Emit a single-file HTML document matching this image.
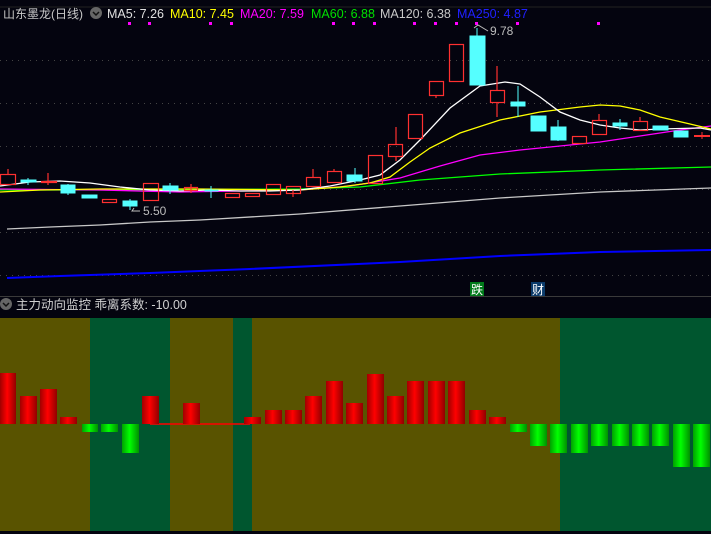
<!DOCTYPE html><html><head><meta charset="utf-8"><style>
body{margin:0;width:711px;height:534px;background:#04040f;overflow:hidden;font-family:"Liberation Sans","Noto Sans CJK SC",sans-serif}
</style></head><body>
<svg width="711" height="534" xmlns="http://www.w3.org/2000/svg" style="position:absolute;left:0;top:0">
<defs>
<linearGradient id="rg" x1="0" x2="1"><stop offset="0" stop-color="#a00000"/><stop offset=".45" stop-color="#ff0000"/><stop offset="1" stop-color="#900000"/></linearGradient>
<linearGradient id="gg" x1="0" x2="1"><stop offset="0" stop-color="#00a000"/><stop offset=".45" stop-color="#00ff00"/><stop offset="1" stop-color="#009000"/></linearGradient>
</defs>
<rect width="711" height="534" fill="#04040f"/>
<line x1="0" y1="7" x2="711" y2="7" stroke="#222" stroke-width="1"/>
<g stroke="#444" stroke-dasharray="1,5" stroke-width="1">
<line x1="0" y1="60.5" x2="711" y2="60.5"/><line x1="0" y1="103.5" x2="711" y2="103.5"/><line x1="0" y1="146.5" x2="711" y2="146.5"/><line x1="0" y1="189.5" x2="711" y2="189.5"/><line x1="0" y1="232.5" x2="711" y2="232.5"/><line x1="0" y1="275.5" x2="711" y2="275.5"/>
</g>
<line x1="0" y1="296.5" x2="711" y2="296.5" stroke="#3a3a3a"/>
<g fill="#ff00ff">
<rect x="128" y="22" width="3" height="3"/><rect x="148" y="22" width="3" height="3"/><rect x="209" y="22" width="3" height="3"/><rect x="230" y="22" width="3" height="3"/><rect x="332" y="22" width="3" height="3"/><rect x="352" y="22" width="3" height="3"/><rect x="373" y="22" width="3" height="3"/><rect x="413" y="22" width="3" height="3"/><rect x="434" y="22" width="3" height="3"/><rect x="455" y="22" width="3" height="3"/><rect x="475" y="22" width="3" height="3"/><rect x="516" y="22" width="3" height="3"/><rect x="597" y="22" width="3" height="3"/>
</g>
<g fill="none" stroke-width="1.3">
<polyline stroke="#0000ff" stroke-width="2" points="7,278 60,276 150,273 250,269 400,262 500,256 600,252 711,250"/>
<polyline stroke="#c8c8c8" points="7,229 50,227 100,225 150,222 200,220 300,214 400,206 500,198 600,192 711,188"/>
<polyline stroke="#00ff00" points="0,190 100,190 300,189 360,187 420,180 500,174 600,170 711,167"/>
<polyline stroke="#ff00ff" points="0,189 100,190 180,192 300,190 350,186 400,178 440,166 480,155 520,150 560,146 600,142 640,136 680,130 711,126"/>
<polyline stroke="#ffff00" points="0,192 40,190 100,189 200,189 300,190 340,187 370,183 390,177 410,162 430,148 460,133 500,120 540,112 580,107 600,105 620,106 640,110 660,117 690,124 711,129"/>
<polyline stroke="#ffffff" points="0,186 30,182 60,181 90,183 120,187 150,190 180,191 210,190 240,191 270,191 300,190 330,186 360,180 380,175 400,160 420,140 450,108 480,86 505,82 520,84 540,97 560,112 580,120 600,125 620,128 640,130 660,129 700,128 711,130"/>
</g>
<g stroke="#ff3030" fill="none" stroke-width="1.2">
<line x1="8" y1="169" x2="8" y2="174"/><rect x="0.5" y="174.5" width="15" height="10"/>
<line x1="48" y1="173" x2="48" y2="185"/><rect x="41.5" y="181.5" width="15" height="1"/>
<rect x="102.5" y="199.5" width="14" height="3"/>
<rect x="143.5" y="183.5" width="15" height="17"/>
<line x1="191" y1="184" x2="191" y2="193"/><rect x="184.5" y="187.5" width="13" height="3"/>
<rect x="225.5" y="193.5" width="14" height="4"/>
<rect x="245.5" y="193.5" width="14" height="3"/>
<rect x="266.5" y="184.5" width="14" height="10"/>
<line x1="293" y1="190" x2="293" y2="197"/><rect x="286.5" y="186.5" width="14" height="7"/>
<line x1="313" y1="169" x2="313" y2="177"/><rect x="306.5" y="177.5" width="14" height="9"/>
<line x1="334" y1="169" x2="334" y2="171"/><rect x="327.5" y="171.5" width="14" height="11"/>
<rect x="368.5" y="155.5" width="14" height="28"/>
<line x1="396" y1="127" x2="396" y2="144"/><line x1="396" y1="156" x2="396" y2="161"/><rect x="388.5" y="144.5" width="14" height="12"/>
<rect x="408.5" y="114.5" width="14" height="24"/>
<line x1="436" y1="95" x2="436" y2="98"/><rect x="429.5" y="81.5" width="14" height="14"/>
<rect x="449.5" y="44.5" width="14" height="37"/>
<line x1="497" y1="66" x2="497" y2="90"/><line x1="497" y1="102" x2="497" y2="117"/><rect x="490.5" y="90.5" width="14" height="12"/>
<rect x="572.5" y="136.5" width="14" height="7"/>
<line x1="599" y1="114" x2="599" y2="120"/><rect x="592.5" y="120.5" width="14" height="14"/>
<line x1="640" y1="117" x2="640" y2="121"/><rect x="633.5" y="121.5" width="14" height="9"/>
</g>
<rect x="694" y="135" width="16" height="2" fill="#ff3030"/><line x1="702" y1="132" x2="702" y2="139" stroke="#ff3030"/>
<g fill="#55ffff" stroke="#55ffff">
<line x1="28" y1="178" x2="28" y2="185"/><rect x="21" y="180" width="15" height="2"/>
<line x1="68" y1="184" x2="68" y2="195"/><rect x="61" y="185" width="14" height="8"/>
<rect x="82" y="195" width="15" height="3"/>
<line x1="130" y1="199" x2="130" y2="210"/><rect x="123" y="201" width="14" height="5"/>
<line x1="170" y1="183" x2="170" y2="194"/><rect x="163" y="186" width="15" height="4"/>
<line x1="211" y1="186" x2="211" y2="198"/><rect x="205" y="190" width="13" height="1"/>
<line x1="355" y1="168" x2="355" y2="183"/><rect x="347" y="175" width="15" height="6"/>
<line x1="477" y1="28" x2="477" y2="36"/><rect x="470" y="36" width="15" height="49"/>
<line x1="518" y1="86" x2="518" y2="117"/><rect x="511" y="102" width="14" height="4"/>
<rect x="531" y="116" width="15" height="15"/>
<line x1="558" y1="120" x2="558" y2="141"/><rect x="551" y="127" width="15" height="13"/>
<line x1="620" y1="119" x2="620" y2="130"/><rect x="613" y="123" width="14" height="3"/>
<rect x="653" y="126" width="15" height="4"/>
<rect x="674" y="131" width="14" height="6"/>
</g>
<g fill="#bbb" font-size="12">
<text x="490" y="35">9.78</text><text x="143" y="215">5.50</text>
</g>
<polyline points="474,28 478,25 488,31" stroke="#bbb" fill="none"/>
<polyline points="140,211 132,211 134,208" stroke="#bbb" fill="none"/>
<rect x="470" y="282" width="14" height="14" fill="#007a1a"/>
<text x="471" y="294" font-size="12" fill="#fff">跌</text>
<rect x="531" y="282" width="14" height="14" fill="#0a3a6a"/>
<text x="532" y="294" font-size="12" fill="#fff">财</text>
<text x="3" y="18" font-size="12" fill="#c8c8c8">山东墨龙(日线)</text>
<circle cx="96" cy="13" r="6" fill="#666"/><polyline points="93,12 96,15 99,12" stroke="#111" stroke-width="1.5" fill="none"/>
<g font-size="12.5">
<text x="107" y="18" fill="#e0e0e0">MA5: 7.26</text>
<text x="170" y="18" fill="#ffff00">MA10: 7.45</text>
<text x="240" y="18" fill="#ff00ff">MA20: 7.59</text>
<text x="311" y="18" fill="#00e000">MA60: 6.88</text>
<text x="380" y="18" fill="#c8c8c8">MA120: 6.38</text>
<text x="457" y="18" fill="#2020ff">MA250: 4.87</text>
</g>
<circle cx="6" cy="304" r="6" fill="#666"/><polyline points="3,303 6,306 9,303" stroke="#111" stroke-width="1.5" fill="none"/>
<text x="16" y="309" font-size="12.5" fill="#d0d0d0">主力动向监控  乖离系数: -10.00</text>
<rect x="0" y="318" width="711" height="213" fill="#595300"/>
<rect x="90" y="318" width="80" height="213" fill="#00562f"/>
<rect x="233" y="318" width="19" height="213" fill="#00562f"/>
<rect x="560" y="318" width="151" height="213" fill="#00562f"/>
<line x1="150" y1="424" x2="250" y2="424" stroke="#ff0000" stroke-width="1.5"/>
<g fill="url(#rg)">
<rect x="0" y="373" width="16" height="51"/><rect x="20" y="396" width="17" height="28"/><rect x="40" y="389" width="17" height="35"/><rect x="60" y="417" width="17" height="7"/>
<rect x="142" y="396" width="17" height="28"/><rect x="183" y="403" width="17" height="21"/><rect x="244" y="417" width="17" height="7"/>
<rect x="265" y="410" width="17" height="14"/><rect x="285" y="410" width="17" height="14"/><rect x="305" y="396" width="17" height="28"/><rect x="326" y="381" width="17" height="43"/><rect x="346" y="403" width="17" height="21"/><rect x="367" y="374" width="17" height="50"/><rect x="387" y="396" width="17" height="28"/><rect x="407" y="381" width="17" height="43"/><rect x="428" y="381" width="17" height="43"/><rect x="448" y="381" width="17" height="43"/><rect x="469" y="410" width="17" height="14"/><rect x="489" y="417" width="17" height="7"/>
</g>
<g fill="url(#gg)">
<rect x="82" y="424" width="16" height="8"/><rect x="101" y="424" width="17" height="8"/><rect x="122" y="424" width="17" height="29"/>
<rect x="510" y="424" width="17" height="8"/><rect x="530" y="424" width="17" height="22"/><rect x="550" y="424" width="17" height="29"/><rect x="571" y="424" width="17" height="29"/><rect x="591" y="424" width="17" height="22"/><rect x="612" y="424" width="17" height="22"/><rect x="632" y="424" width="17" height="22"/><rect x="652" y="424" width="17" height="22"/><rect x="673" y="424" width="17" height="43"/><rect x="693" y="424" width="17" height="43"/>
</g>
</svg>
</body></html>
